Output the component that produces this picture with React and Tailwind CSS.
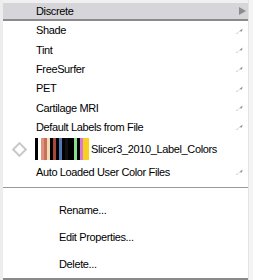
const stripes = [
  '#000000', '#ffffff', '#e0907c', '#c8705c', '#f0dcb4', '#000000',
  '#a84838', '#000000', '#5078b8', '#000000', '#101010', '#000000',
  '#000000', '#88e088', '#000000', '#d878d8', '#f8d020', '#f8d020',
]

const items = ['Shade', 'Tint', 'FreeSurfer', 'PET', 'Cartilage MRI', 'Default Labels from File']

const Arrow = () => (
  <svg width="7" height="6" viewBox="0 0 7 6" className="block">
    <polygon points="0,6 6.5,0.5 6,3.5 3.5,3 0.8,6" fill="#8e8e8e" />
  </svg>
)

const Row = ({ label }) => (
  <div className="h-[19.3px] flex items-center pl-[33px] pr-[5px] justify-between">
    <span>{label}</span>
    <Arrow />
  </div>
)

export default function App() {
  return (
    <div
      className="w-[253px] h-[280px] bg-white flex text-[11px] tracking-[-0.37px] text-black overflow-hidden"
      style={{ fontFamily: '"Liberation Sans", Arial, sans-serif' }}
    >
      <div className="w-[3px] bg-[#ededed]" />
      <div className="flex-1 flex flex-col">
        <div className="h-[3px] bg-[#f0f0f0]" />
        <div className="h-[16px] bg-[#d6d6da] flex items-center justify-between pl-[33px] pr-[2px]">
          <span>Discrete</span>
          <svg width="7" height="8" viewBox="0 0 7 8" className="block">
            <polygon points="0,0 7,4 0,8" fill="#8c8c8c" />
          </svg>
        </div>
        <div className="h-[2px] bg-[#8a8a8a]" />
        {items.map((label) => (
          <Row key={label} label={label} />
        ))}
        <div className="h-[25px] flex items-center">
          <div className="w-[32px] flex justify-center">
            <div className="w-[11px] h-[11px] rotate-45 border-2 border-[#c8c8c8]" />
          </div>
          <div className="flex h-[22px]">
            {stripes.map((c, i) => (
              <div key={i} className="w-[3px] h-full" style={{ backgroundColor: c }} />
            ))}
          </div>
          <span className="ml-[2px]">Slicer3_2010_Label_Colors</span>
        </div>
        <div className="h-[21px] flex items-center pl-[33px] pr-[5px] justify-between">
          <span>Auto Loaded User Color Files</span>
          <Arrow />
        </div>
        <div className="h-[4px]" />
        <div className="h-[1.5px] bg-[#9a9a9a]" />
        <div className="h-[8px]" />
        <div className="flex flex-col pl-[56px]">
          <div className="h-[27px] flex items-center">Rename...</div>
          <div className="h-[27px] flex items-center">Edit Properties...</div>
          <div className="h-[27px] flex items-center">Delete...</div>
        </div>
        <div className="flex-1" />
        <div className="h-[2px] bg-[#8a8a8a]" />
      </div>
      <div className="w-[5px] bg-[#f4f4f4] border-l border-[#e4e4e4]" />
    </div>
  )
}
